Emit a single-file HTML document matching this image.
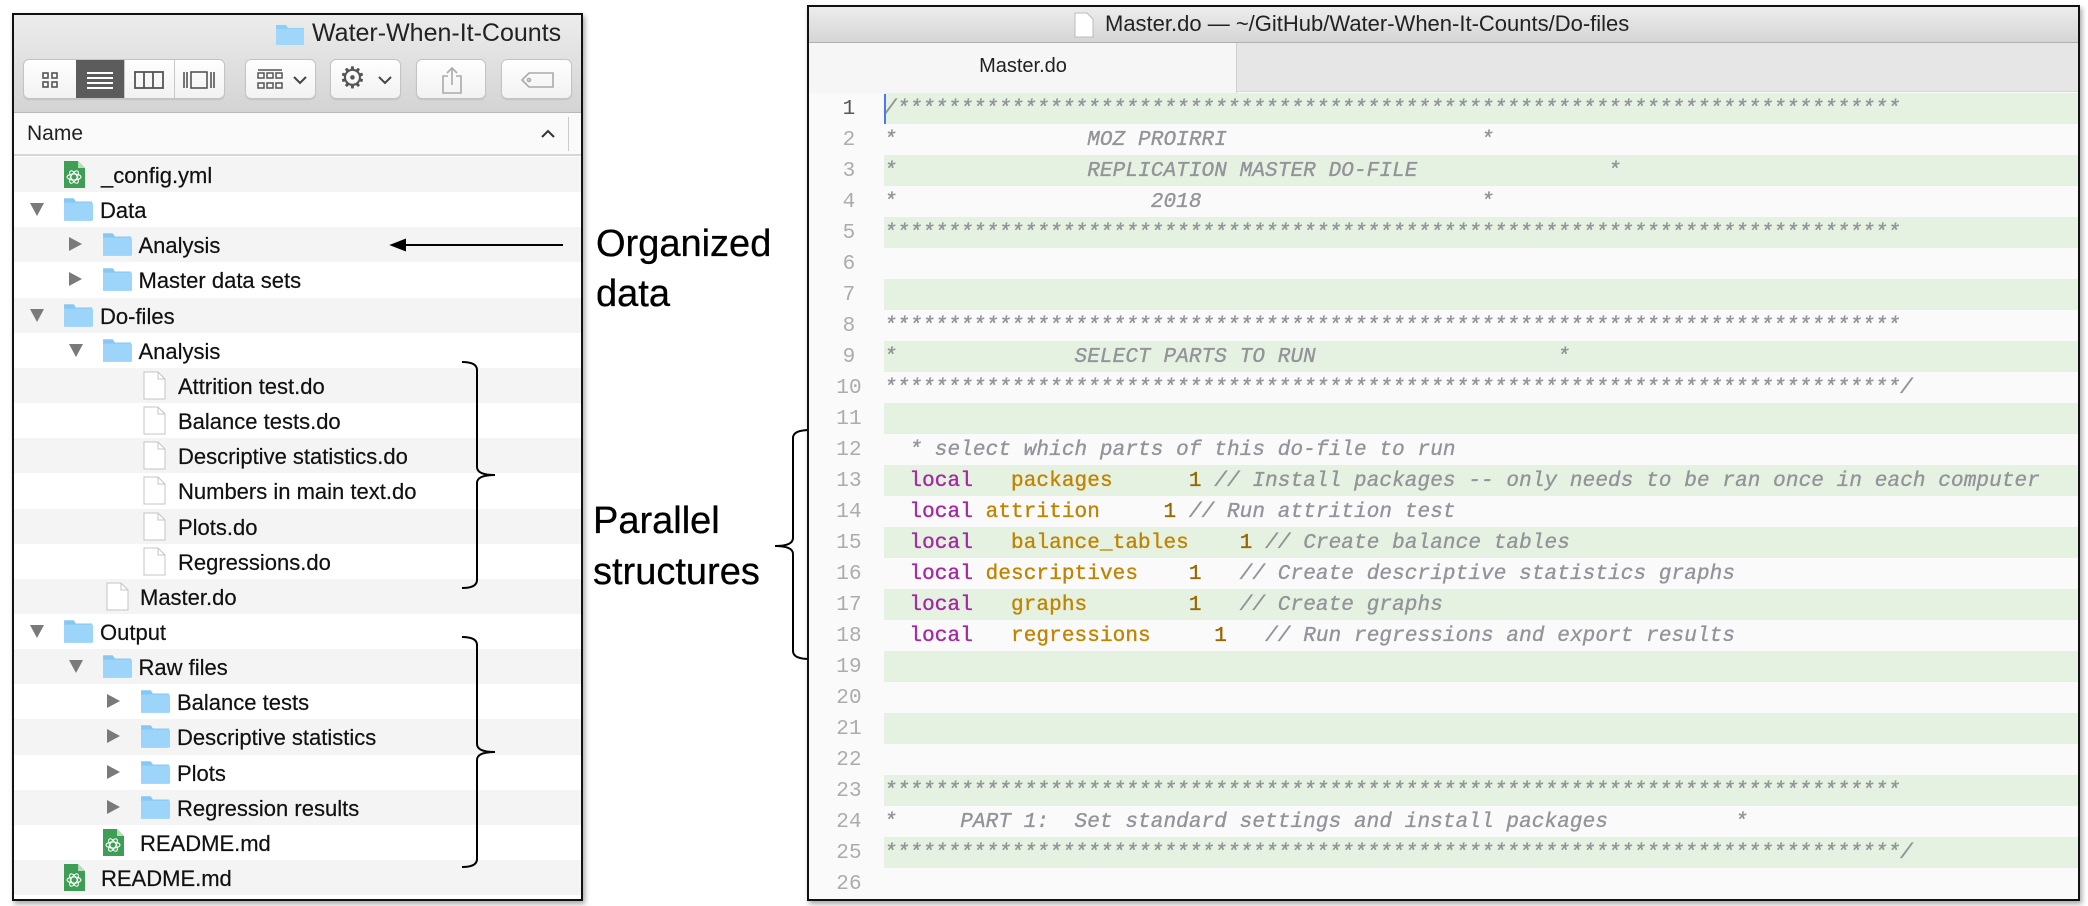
<!DOCTYPE html>
<html><head><meta charset="utf-8"><style>
*{margin:0;padding:0;box-sizing:border-box}
body{width:2088px;height:906px;background:#fff;position:relative;overflow:hidden;font-family:"Liberation Sans",sans-serif;color:#111}
.abs{position:absolute}
#fin{left:12px;top:13px;width:571px;height:888px;border:2px solid #111;background:#fff;overflow:hidden;box-shadow:2px 3px 5px rgba(0,0,0,.35)}
#tb{left:0;top:0;width:100%;height:98px;background:linear-gradient(#ececec,#d4d4d4);border-bottom:1px solid #b8b8b8}
.btn{position:absolute;top:44px;height:40px;background:linear-gradient(#fefefe,#f2f2f2);border:1px solid #c4c4c4;border-radius:6px;box-shadow:0 1px 1px rgba(0,0,0,.1)}
.row{position:absolute;left:0;width:100%;height:35.15px;font-size:22px;line-height:37px;-webkit-text-stroke:0.2px #111}
.g{background:#f4f4f4}
.tri{position:absolute;top:11px;width:0;height:0}
.down{border-left:7px solid transparent;border-right:7px solid transparent;border-top:13px solid #7a7a7a}
.right{border-top:7px solid transparent;border-bottom:7px solid transparent;border-left:13px solid #7a7a7a;top:10px}
.fold{position:absolute;top:4px;width:30px;height:26px}
.file{position:absolute;top:3px;width:23px;height:29px}
#ed{left:807px;top:5px;width:1273px;height:896px;border:2px solid #111;background:#fafafa;overflow:hidden;box-shadow:2px 3px 5px rgba(0,0,0,.35)}
.ln{position:absolute;left:0;width:1273px;height:31px;font-family:"Liberation Mono",monospace;font-size:21px;letter-spacing:0.1px;line-height:33px;white-space:pre;-webkit-text-stroke:0.35px}
.ln .n{position:absolute;left:18px;width:44px;text-align:center;color:#acacac;font-size:21px;-webkit-text-stroke:0}
.ln .c{position:absolute;left:75px;color:#93939a;font-style:italic}
.gr{background:linear-gradient(90deg,#fafafa 75px,#e5f2e1 75px)}
.k{color:#a626a4;font-style:normal}
.v{color:#c18401;font-style:normal}
.o{color:#986801;font-style:normal}
.lbl{font-family:"Liberation Sans",sans-serif;font-size:38px;color:#000;-webkit-text-stroke:0.3px #000}
</style></head><body>

<div id="fin" class="abs">
 <div id="tb" class="abs">
  <svg class="abs" style="left:261px;top:7px" width="30" height="24"><path d="M1 3h10l2 3h16v17H1z" fill="#8ecdf6"/><rect x="1" y="7" width="28" height="16" fill="#9fd6fa"/></svg>
  <div class="abs" style="left:298px;top:4px;font-size:25px;color:#222">Water-When-It-Counts</div>
  <div class="btn" style="left:9px;width:202px;overflow:hidden">
   <div class="abs" style="left:52px;top:0;width:48px;height:40px;background:#5c5c5c"></div>
   <div class="abs" style="left:100px;top:0;width:1px;height:40px;background:#c8c8c8"></div>
   <div class="abs" style="left:150px;top:0;width:1px;height:40px;background:#c8c8c8"></div>
   <svg class="abs" style="left:18px;top:12px" width="16" height="16" fill="none" stroke="#555" stroke-width="1.6"><rect x="1" y="1" width="5" height="5"/><rect x="10" y="1" width="5" height="5"/><rect x="1" y="10" width="5" height="5"/><rect x="10" y="10" width="5" height="5"/></svg>
   <svg class="abs" style="left:62px;top:11px" width="28" height="18" stroke="#fff" stroke-width="2"><path d="M1 2h26M1 7h26M1 12h26M1 17h26"/></svg>
   <svg class="abs" style="left:110px;top:11px" width="30" height="18" fill="none" stroke="#555" stroke-width="1.8"><rect x="1" y="1" width="28" height="16"/><path d="M10 1v16M19 1v16"/></svg>
   <svg class="abs" style="left:158px;top:11px" width="34" height="18" fill="none" stroke="#555" stroke-width="1.6"><rect x="9" y="1" width="16" height="16"/><path d="M2 1v16M5 1v16M29 1v16M32 1v16"/></svg>
  </div>
  <div class="btn" style="left:231px;width:71px">
   <svg class="abs" style="left:11px;top:9px" width="26" height="22" fill="none" stroke="#555" stroke-width="1.5"><path d="M1 1h24"/><rect x="1" y="4" width="6" height="5"/><rect x="10" y="4" width="6" height="5"/><rect x="19" y="4" width="6" height="5"/><rect x="1" y="14" width="6" height="5"/><rect x="10" y="14" width="6" height="5"/><rect x="19" y="14" width="6" height="5"/></svg>
   <svg class="abs" style="left:47px;top:15px" width="14" height="10" fill="none" stroke="#444" stroke-width="2"><path d="M1 2l6 6 6-6"/></svg>
  </div>
  <div class="btn" style="left:316px;width:71px">
   <div class="abs" style="left:8px;top:2px;font-size:30px;color:#555;line-height:34px">&#9881;</div>
   <svg class="abs" style="left:47px;top:15px" width="14" height="10" fill="none" stroke="#444" stroke-width="2"><path d="M1 2l6 6 6-6"/></svg>
  </div>
  <div class="btn" style="left:402px;width:70px">
   <svg class="abs" style="left:25px;top:6px" width="20" height="28" fill="none" stroke="#aaa" stroke-width="1.6"><path d="M6 10H1v17h18V10h-5M10 19V2M5 7l5-5 5 5"/></svg>
  </div>
  <div class="btn" style="left:487px;width:71px">
   <svg class="abs" style="left:19px;top:12px" width="34" height="16" fill="none" stroke="#aaa" stroke-width="1.6"><path d="M8 1h24v14H8L1 8z"/><circle cx="8" cy="8" r="1.5"/></svg>
  </div>
 </div>
 <div class="abs" style="left:0;top:98px;width:100%;height:43px;background:#fafafa;border-bottom:2px solid #d6d6d6">
  <div class="abs" style="left:13px;top:9px;font-size:21px;color:#222">Name</div>
  <svg class="abs" style="left:527px;top:16px" width="14" height="9" fill="none" stroke="#333" stroke-width="2"><path d="M1 8l6-6 6 6"/></svg>
  <div class="abs" style="left:554px;top:4px;width:1px;height:34px;background:#ccc"></div>
 </div>
 <div id="rows"></div>
</div>

<svg class="abs" style="left:0;top:0" width="2088" height="906" fill="none" stroke="#000" stroke-width="2">
 <path d="M392 245H563"/><path d="M392 245l13-5v10z" fill="#000"/>
 <path d="M462 362q15 0 15 8v97q0 8 18 8q-18 0 -18 8v97q0 8 -15 8"/>
 <path d="M462 637q15 0 15 8v99q0 8 18 8q-18 0 -18 8v99q0 8 -15 8"/>
 <path d="M810 430q-17 0 -17 8v100q0 8 -18 8q18 0 18 8v97q0 8 17 8"/>
</svg>
<div class="abs lbl" style="left:596px;top:219px;line-height:50px">Organized<br>data</div>
<div class="abs lbl" style="left:593px;top:496px;line-height:51px">Parallel<br>structures</div>

<div id="ed" class="abs">
 <div class="abs" style="left:0;top:0;width:100%;height:36px;background:linear-gradient(#ededed,#d5d5d5);border-bottom:1px solid #b0b0b0">
  <svg class="abs" style="left:265px;top:5px" width="20" height="26"><path d="M1 1h12l6 6v18H1z" fill="#fff" stroke="#bbb"/></svg>
  <div class="abs" style="left:296px;top:4px;font-size:22px;color:#222;white-space:nowrap">Master.do — ~/GitHub/Water-When-It-Counts/Do-files</div>
 </div>
 <div class="abs" style="left:0;top:36px;width:100%;height:49px;background:#e6e6e6;border-bottom:1px solid #d8d8d8"></div>
 <div class="abs" style="left:0;top:36px;width:428px;height:50px;background:#f6f6f6;border-right:1px solid #d0d0d0"></div>
 <div class="abs" style="left:0;top:48px;width:428px;text-align:center;font-size:20px;color:#222">Master.do</div>
 <div id="code"></div>
 <div class="abs" style="left:75px;top:87px;width:2px;height:30px;background:#4d78e8"></div>
</div>

<script>
var rows=[
 [1,'atom','_config.yml',0,null],
 [0,'fold','Data',0,'d'],
 [1,'fold','Analysis',1,'r'],
 [1,'fold','Master data sets',1,'r'],
 [0,'fold','Do-files',0,'d'],
 [1,'fold','Analysis',1,'d'],
 [2,'file','Attrition test.do',2,null],
 [2,'file','Balance tests.do',2,null],
 [2,'file','Descriptive statistics.do',2,null],
 [2,'file','Numbers in main text.do',2,null],
 [2,'file','Plots.do',2,null],
 [2,'file','Regressions.do',2,null],
 [1,'file','Master.do',1,null],
 [0,'fold','Output',0,'d'],
 [1,'fold','Raw files',1,'d'],
 [2,'fold','Balance tests',2,'r'],
 [2,'fold','Descriptive statistics',2,'r'],
 [2,'fold','Plots',2,'r'],
 [2,'fold','Regression results',2,'r'],
 [1,'atom','README.md',1,null],
 [0,'atom','README.md',0,null]];
var h='';
rows.forEach(function(r,i){
 var lv=r[3],off=lv*38.5;
 var top=142+i*35.15;
 h+='<div class="row'+(i%2==0?' g':'')+'" style="top:'+top+'px">';
 if(r[4]) h+='<div class="tri '+(r[4]=='d'?'down':'right')+'" style="left:'+(16+off)+'px"></div>';
 var ix=49+off, tx=86+off;
 if(r[1]=='fold') h+='<svg class="fold" style="left:'+ix+'px" viewBox="0 0 28 24"><path d="M1 2h9l2 3h15v18H1z" fill="#86c8f3"/><rect x="1" y="6" width="27" height="17" rx="1" fill="#9dd5fa"/></svg>';
 else if(r[1]=='file'){ix=(lv==2?129:92);tx=(lv==2?164:126);h+='<svg class="file" style="left:'+ix+'px" viewBox="0 0 23 29"><path d="M1 1h14l7 7v20H1z" fill="#fff" stroke="#c4c4c4"/><path d="M15 1v7h7" fill="none" stroke="#c4c4c4"/></svg>';}
 else {ix=(lv==0?49:88);tx=(lv==0?87:126);h+='<svg class="file" style="left:'+ix+'px" viewBox="0 0 23 29"><path d="M1 1h14l7 7v20H1z" fill="#3f9e55"/><path d="M15 1v7h7z" fill="#b6dcb9"/><ellipse cx="11" cy="17" rx="7" ry="3" fill="none" stroke="#fff" stroke-width="1"/><ellipse cx="11" cy="17" rx="7" ry="3" transform="rotate(60 11 17)" fill="none" stroke="#fff" stroke-width="1"/><ellipse cx="11" cy="17" rx="7" ry="3" transform="rotate(-60 11 17)" fill="none" stroke="#fff" stroke-width="1"/></svg>';}
 h+='<div class="abs" style="left:'+tx+'px;top:0">'+r[2]+'</div></div>';
});
document.getElementById('rows').innerHTML=h;

function sp(n){return ' '.repeat(n)}
function pad(s,c){return s+sp(Math.max(1,c-s.length))}
var st='*'.repeat(80);
var L=[
 '/'+'*'.repeat(79),
 pad(pad('*',16)+'MOZ PROIRRI',47)+'*',
 pad(pad('*',16)+'REPLICATION MASTER DO-FILE',57)+'*',
 pad(pad('*',21)+'2018',47)+'*',
 st,'','',st,
 pad(pad('*',15)+'SELECT PARTS TO RUN',53)+'*',
 st+'/','',
 '  * select which parts of this do-file to run',
 ['packages',10,24,26,'// Install packages -- only needs to be ran once in each computer'],
 ['attrition',8,22,24,'// Run attrition test'],
 ['balance_tables',10,28,30,'// Create balance tables'],
 ['descriptives',8,24,28,'// Create descriptive statistics graphs'],
 ['graphs',10,24,28,'// Create graphs'],
 ['regressions',10,26,30,'// Run regressions and export results'],
 '','','','',
 st,
 pad(pad('*',6)+'PART 1:',15)+pad('Set standard settings and install packages',52)+'*',
 st+'/',''];
var c='';
L.forEach(function(l,i){
 var s;
 if(typeof l=='string') s=l;
 else{
  var a='  local'+sp(l[1]-7);
  var b=a+l[0]; var b2=pad(b,l[2]); var b3=pad(b2+'1',l[3]);
  s='  <span class="k">local</span>'+sp(l[1]-7)+'<span class="v">'+l[0]+'</span>'+sp(b2.length-b.length)+'<span class="o">1</span>'+sp(b3.length-b2.length-1)+l[4];
 }
 c+='<div class="ln'+(i%2==0?' gr':'')+'" style="top:'+(86+i*31)+'px"><span class="n"'+(i==0?' style="color:#555"':'')+'>'+(i+1)+'</span><span class="c">'+s+'</span></div>';
});
document.getElementById('code').innerHTML=c;
</script>
</body></html>
